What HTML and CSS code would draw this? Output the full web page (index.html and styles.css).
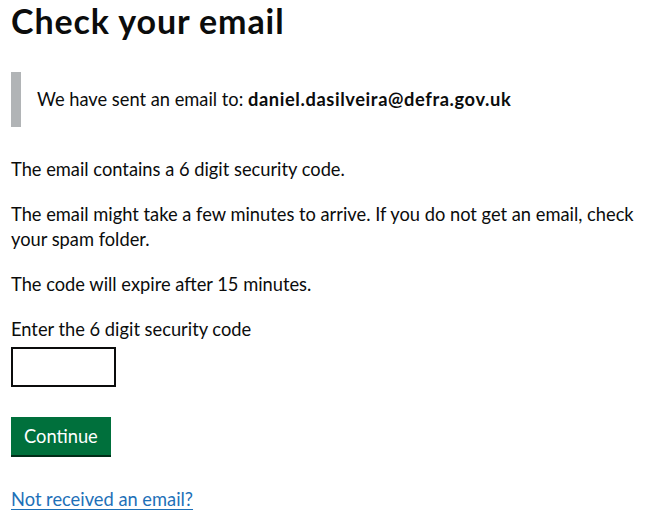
FILE: index.html
```html
<!DOCTYPE html>
<html lang="en">
<head>
<meta charset="utf-8">
<title>Check your email</title>
<link rel="stylesheet" href="styles.css">
</head>
<body>
<main class="page">
  <h1 class="heading-l">Check your email</h1>
  <div class="inset">
    We have sent an email to: <strong>daniel.dasilveira@defra.gov.uk</strong>
  </div>
  <p class="body">The email contains a 6 digit security code.</p>
  <p class="body">The email might take a few minutes to arrive. If you do not get an email, check your spam folder.</p>
  <p class="body">The code will expire after 15 minutes.</p>
  <form class="form">
    <div class="form-group">
      <label class="label" for="code">Enter the 6 digit security code</label>
      <input class="input" id="code" name="code" type="text" inputmode="numeric" autocomplete="one-time-code">
    </div>
    <button class="button" type="button">Continue</button>
  </form>
  <p class="body"><a class="link" href="#">Not received an email?</a></p>
</main>
</body>
</html>
```
FILE: styles.css
```css
* { box-sizing: border-box; }
html, body { margin: 0; padding: 0; background: #ffffff; }
body {
  font-family: "Lato", "Liberation Sans", sans-serif;
  color: #0b0c0c;
  font-size: 18.3px;
  line-height: 25px;
}
.page {
  padding: 0 11px;
}
.heading-l {
  margin: 0 0 31px;
  font-size: 34px;
  line-height: 41px;
  font-weight: 700;
  letter-spacing: 0.9px;
}
.inset {
  margin: 31px 0 30px;
  padding: 15px 15px 15px 16px;
  border-left: 10px solid #b1b4b6;
}
.inset strong {
  font-weight: 700;
  letter-spacing: 0.6px;
}
.body {
  margin: 0 0 20px;
}
.inset + .body { margin-top: 30px; }
.form { margin: 0; }
.form-group { margin-bottom: 30px; }
.label {
  display: block;
  margin-bottom: 5px;
}
.input {
  display: block;
  width: 105px;
  height: 40px;
  margin: 0;
  padding: 5px;
  border: 2px solid #0b0c0c;
  border-radius: 0;
  font: inherit;
  background: #fff;
}
.button {
  display: block;
  margin: 0 0 32px;
  padding: 8px 11px 7px;
  border: 2px solid transparent;
  border-radius: 0;
  background: #00703c;
  box-shadow: 0 2px 0 #002d18;
  color: #ffffff;
  font-family: inherit;
  font-size: 18.3px;
  line-height: 19px;
  cursor: pointer;
}
.link {
  color: #1d70b8;
  text-decoration: underline;
  text-decoration-thickness: 1px;
  text-underline-offset: 3px;
}
```
